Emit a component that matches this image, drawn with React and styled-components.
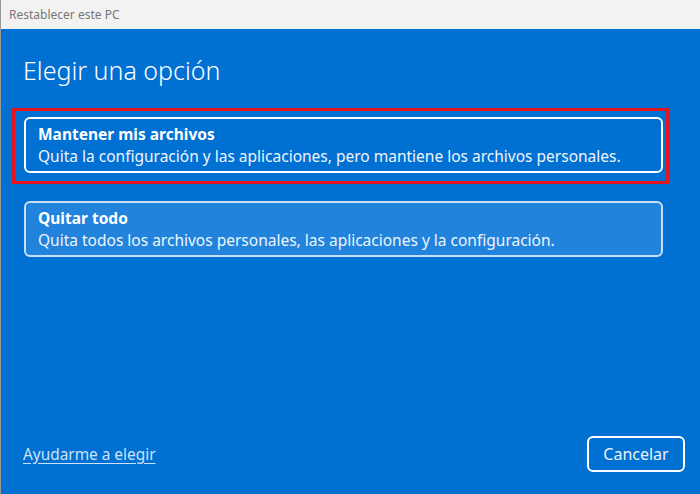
import React from "react";
import styled, { createGlobalStyle } from "styled-components";

const Global = createGlobalStyle`
  html, body { margin: 0; padding: 0; }
  body { font-family: "Noto Sans", "Open Sans", sans-serif; }
`;

const Window = styled.div`
  width: 700px;
  height: 494px;
  display: flex;
  flex-direction: column;
  border-left: 1px solid #9a9a9a;
  box-sizing: border-box;
  overflow: hidden;
`;

const TitleBar = styled.div`
  height: 29px;
  flex: none;
  background: #f2f2f2;
  display: flex;
  align-items: center;
  padding-left: 8px;
  font-size: 12px;
  color: #777;
`;

const Body = styled.div`
  flex: 1;
  background: #0170d3;
  display: flex;
  flex-direction: column;
  padding: 24px 15px 22px 22px;
  color: #fff;
`;

const Heading = styled.h1`
  margin: 0;
  font-weight: 300;
  font-size: 25px;
  line-height: 34px;
`;

const Options = styled.div`
  display: flex;
  flex-direction: column;
  gap: 17px;
  margin-top: 21px;
  margin-left: -11px;
`;

const Highlight = styled.div`
  box-sizing: border-box;
  border: 3px solid #e3161e;
  padding: 6px 3px 8px 9px;
  width: 657px;
`;

const Plain = styled.div`
  box-sizing: border-box;
  padding: 0 3px 0 12px;
  width: 657px;
`;

const Card = styled.button`
  display: flex;
  flex-direction: column;
  align-items: flex-start;
  width: 639px;
  box-sizing: border-box;
  height: 56px;
  padding: 4px 12px 0 12px;
  border: 2px solid ${(p) => (p.$alt ? "rgba(255,255,255,0.75)" : "#ffffff")};
  border-radius: 6px;
  background: ${(p) => (p.$alt ? "#2183dc" : "transparent")};
  color: #fff;
  font-family: inherit;
  text-align: left;
  cursor: pointer;
`;

const CardTitle = styled.span`
  font-weight: 700;
  font-size: 15.5px;
  line-height: 22px;
`;

const CardDesc = styled.span`
  font-size: 15.5px;
  line-height: 22px;
  color: #eef5fc;
`;

const Footer = styled.div`
  margin-top: auto;
  display: flex;
  justify-content: space-between;
  align-items: center;
`;

const HelpLink = styled.a`
  font-size: 15.4px;
  color: #cfe2f6;
  text-decoration: underline;
  text-underline-offset: 3px;
  cursor: pointer;
`;

const CancelButton = styled.button`
  width: 98px;
  height: 36px;
  border: 2px solid #fff;
  border-radius: 6px;
  background: transparent;
  color: #eaf3fc;
  font-family: inherit;
  font-size: 16px;
  cursor: pointer;
`;

const options = [
  {
    title: "Mantener mis archivos",
    desc: "Quita la configuración y las aplicaciones, pero mantiene los archivos personales.",
    selected: true,
  },
  {
    title: "Quitar todo",
    desc: "Quita todos los archivos personales, las aplicaciones y la configuración.",
    selected: false,
  },
];

export default function App() {
  return (
    <>
      <Global />
      <Window>
        <TitleBar>Restablecer este PC</TitleBar>
        <Body>
          <Heading>Elegir una opción</Heading>
          <Options>
            {options.map((o) => {
              const Wrap = o.selected ? Highlight : Plain;
              return (
                <Wrap key={o.title}>
                  <Card $alt={!o.selected}>
                    <CardTitle>{o.title}</CardTitle>
                    <CardDesc>{o.desc}</CardDesc>
                  </Card>
                </Wrap>
              );
            })}
          </Options>
          <Footer>
            <HelpLink>Ayudarme a elegir</HelpLink>
            <CancelButton>Cancelar</CancelButton>
          </Footer>
        </Body>
      </Window>
    </>
  );
}
